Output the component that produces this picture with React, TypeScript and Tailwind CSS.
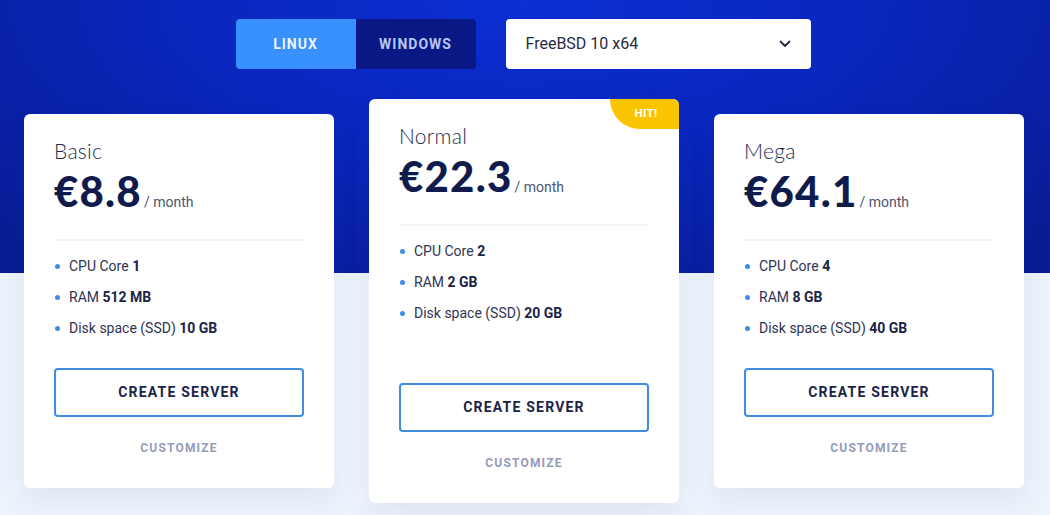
import React from 'react';

type Plan = {
  name: string;
  price: string;
  cpu: string;
  ram: string;
  disk: string;
  hit?: boolean;
};

const plans: Plan[] = [
  { name: 'Basic', price: '€8.8', cpu: '1', ram: '512 MB', disk: '10 GB' },
  { name: 'Normal', price: '€22.3', cpu: '2', ram: '2 GB', disk: '20 GB', hit: true },
  { name: 'Mega', price: '€64.1', cpu: '4', ram: '8 GB', disk: '40 GB' },
];

const Feature: React.FC<{ label: string; value: string }> = ({ label, value }) => (
  <li className="flex items-center h-[31px]">
    <span className="w-[5px] h-[5px] rounded-full bg-[#3d8de6] ml-[1px] mr-[9px]"></span>
    <span className="text-[14px] text-[#2f3553]">
      {label} <b className="font-bold text-[#1b2347]">{value}</b>
    </span>
  </li>
);

const PlanCard: React.FC<{ plan: Plan }> = ({ plan }) => {
  return (
    <div
      className={`relative w-[310px] ${plan.hit ? 'h-[404px]' : 'h-[374px]'} bg-white rounded-[6px] shadow-[0_12px_30px_rgba(30,70,150,0.07)] px-[30px] pt-[24px] pb-[31px] flex flex-col`}
    >
      {plan.hit && (
        <div className="absolute top-0 right-0 w-[69px] h-[30px] bg-[#fbc400] rounded-tr-[6px] rounded-bl-[30px] flex items-center justify-center pl-[3px]">
          <span className="text-white text-[11.5px] font-bold tracking-[0.3px] font-['Roboto',sans-serif]">HIT!</span>
        </div>
      )}
      <div className="font-['Lato',sans-serif] text-[21px] font-light text-[#262c4d] leading-[26px] tracking-[0.3px]">{plan.name}</div>
      <div className="flex items-baseline mt-[4px]">
        <span className="font-['Lato',sans-serif] text-[42px] font-black text-[#0f1b4d] leading-[46px] tracking-[1.2px]">{plan.price}</span>
        <span className="text-[14px] text-[#4d546f] ml-[2px]">/ month</span>
      </div>
      <div className="h-[2px] bg-[#f2f4f7] mt-[25px]"></div>
      <ul className="mt-[10px]">
        <Feature label="CPU Core" value={plan.cpu} />
        <Feature label="RAM" value={plan.ram} />
        <Feature label="Disk space (SSD)" value={plan.disk} />
      </ul>
      <div className="mt-auto flex flex-col items-center">
        <button className="w-full h-[49px] border-2 border-[#3f8ee2] rounded-[4px] text-[14px] font-bold tracking-[1.2px] text-[#1b2347]">
          CREATE SERVER
        </button>
        <div className="mt-[22px] text-[12px] font-bold tracking-[1.2px] text-[#949bbb]">CUSTOMIZE</div>
      </div>
    </div>
  );
};

const App: React.FC = () => {
  return (
    <div className="relative w-[1050px] h-[515px] overflow-hidden bg-[#edf3fb] font-['Roboto',sans-serif]">
      <div className="absolute inset-x-0 top-0 h-[273px] bg-[radial-gradient(ellipse_70%_120%_at_50%_0%,#0b2fd3_0%,#0a27be_45%,#081c94_100%)]"></div>
      <div className="relative">
        <div className="flex justify-center gap-[30px] pt-[19px] pr-[4px]">
          <div className="flex h-[50px] rounded-[4px] overflow-hidden">
            <button className="w-[120px] bg-[#3790fb] text-[#eef4ff] text-[14px] font-bold tracking-[1px]">LINUX</button>
            <button className="w-[120px] bg-[#0a1886] text-[#b7c8f6] text-[14px] font-bold tracking-[1px]">WINDOWS</button>
          </div>
          <div className="w-[305px] h-[50px] bg-white rounded-[4px] flex items-center justify-between pl-[20px] pr-[20px]">
            <span className="text-[16px] text-[#262b40]">FreeBSD 10 x64</span>
            <svg width="12" height="8" viewBox="0 0 12 8" fill="none">
              <path d="M1.5 1.5 L6 6 L10.5 1.5" stroke="#262b40" strokeWidth="1.8" strokeLinecap="round" strokeLinejoin="round" />
            </svg>
          </div>
        </div>
        <div className="flex justify-center items-center gap-[35px] mt-[30px] pr-[2px]">
          {plans.map((p) => (
            <PlanCard key={p.name} plan={p} />
          ))}
        </div>
      </div>
    </div>
  );
};

export default App;
